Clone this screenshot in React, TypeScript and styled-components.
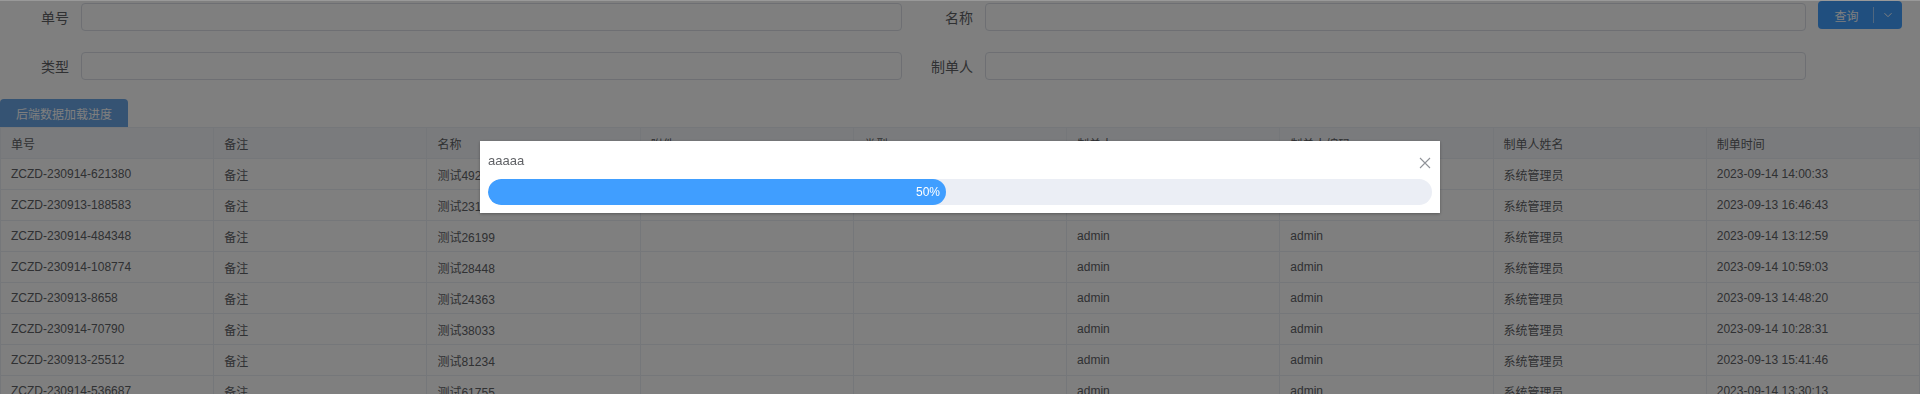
import React from "react";
import styled, { createGlobalStyle } from "styled-components";

const FONT = `"Liberation Sans", "Noto Sans CJK SC", sans-serif`;

const Global = createGlobalStyle`
  html, body { margin: 0; padding: 0; background: #fff; }
  body { font-family: ${FONT}; color: #606266; }
  * { box-sizing: border-box; }
`;

const Page = styled.div`
  width: 1920px;
  height: 394px;
  overflow: hidden;
  background: #fff;
`;

const SearchBar = styled.div`
  display: flex;
  align-items: flex-start;
  padding: 3px 18px 0 0;
`;

const FormGrid = styled.div`
  flex: 1;
  display: grid;
  grid-template-columns: 1fr 1fr;
  column-gap: 2px;
  row-gap: 21px;
`;

const FormItem = styled.div`
  display: flex;
  align-items: center;
  height: 28px;
`;

const Label = styled.label`
  width: 81px;
  flex: none;
  padding-right: 12px;
  text-align: right;
  font-size: 14px;
  color: #606266;
`;

const Input = styled.input`
  flex: 1;
  min-width: 0;
  height: 28px;
  border: 1px solid #dcdfe6;
  border-radius: 4px;
  background: #fff;
  outline: none;
`;

const SplitButton = styled.div`
  display: flex;
  align-items: center;
  width: 84px;
  height: 28px;
  margin: -2px 0 0 12px;
  background: #409eff;
  border-radius: 4px;
  color: #fff;
  font-size: 12px;
`;

const SplitMain = styled.span`
  width: 55px;
  text-align: center;
  padding-left: 2px;
`;

const SplitDivider = styled.span`
  width: 1px;
  height: 16px;
  background: rgba(255, 255, 255, 0.5);
`;

const SplitArrow = styled.span`
  flex: 1;
  display: flex;
  justify-content: center;
  align-items: center;
`;

const Toolbar = styled.div`
  display: flex;
  margin-top: 19px;
`;

const PrimaryButton = styled.button`
  height: 28px;
  width: 128px;
  border: none;
  border-radius: 4px 4px 0 0;
  background: #6aa6e6;
  color: #fff;
  font-family: ${FONT};
  font-size: 12px;
  padding: 0;
`;

const Table = styled.div`
  border-top: 1px solid #ebeef5;
  border-left: 1px solid #ebeef5;
`;

const Row = styled.div<{ $head?: boolean }>`
  display: grid;
  grid-template-columns: repeat(9, 1fr);
  background: ${(p) => (p.$head ? "#f5f7fa" : "#fff")};
`;

const Cell = styled.div`
  height: 31px;
  display: flex;
  align-items: center;
  padding: 0 10px;
  border-right: 1px solid #ebeef5;
  border-bottom: 1px solid #ebeef5;
  font-size: 12px;
  white-space: nowrap;
  overflow: hidden;
  color: #606266;
`;

const Mask = styled.div`
  position: fixed;
  inset: 0;
  background: rgba(0, 0, 0, 0.5);
  border-top: 1px solid rgba(255, 255, 255, 0.2);
`;

const Dialog = styled.div`
  position: fixed;
  top: 141px;
  left: 480px;
  width: 960px;
  background: #fff;
  box-shadow: 0 1px 3px rgba(0, 0, 0, 0.3);
  padding: 10px 8px 8px;
`;

const DialogTitle = styled.div`
  font-size: 13px;
  line-height: 20px;
  color: #606266;
  margin-bottom: 8px;
`;

const CloseButton = styled.button`
  position: absolute;
  top: 15px;
  right: 9px;
  width: 13px;
  height: 13px;
  padding: 0;
  border: none;
  background: transparent;
  display: flex;
  align-items: center;
  justify-content: center;
`;

const Track = styled.div`
  height: 26px;
  border-radius: 100px;
  background: #ebeef5;
  overflow: hidden;
`;

const Fill = styled.div`
  height: 100%;
  border-radius: 100px;
  background: #409eff;
  display: flex;
  align-items: center;
  justify-content: flex-end;
  padding-right: 6px;
  color: #fff;
  font-size: 12px;
`;

const headers = ["单号", "备注", "名称", "附件", "类型", "制单人", "制单人编码", "制单人姓名", "制单时间"];

const rows: [string, string, string][] = [
  ["ZCZD-230914-621380", "测试49213", "2023-09-14 14:00:33"],
  ["ZCZD-230913-188583", "测试23135", "2023-09-13 16:46:43"],
  ["ZCZD-230914-484348", "测试26199", "2023-09-14 13:12:59"],
  ["ZCZD-230914-108774", "测试28448", "2023-09-14 10:59:03"],
  ["ZCZD-230913-8658", "测试24363", "2023-09-13 14:48:20"],
  ["ZCZD-230914-70790", "测试38033", "2023-09-14 10:28:31"],
  ["ZCZD-230913-25512", "测试81234", "2023-09-13 15:41:46"],
  ["ZCZD-230914-536687", "测试61755", "2023-09-14 13:30:13"],
];

export default function App() {
  const percent = 50;
  return (
    <Page>
      <Global />
      <SearchBar>
        <FormGrid>
          <FormItem>
            <Label>单号</Label>
            <Input />
          </FormItem>
          <FormItem>
            <Label>名称</Label>
            <Input />
          </FormItem>
          <FormItem>
            <Label>类型</Label>
            <Input />
          </FormItem>
          <FormItem>
            <Label>制单人</Label>
            <Input />
          </FormItem>
        </FormGrid>
        <SplitButton>
          <SplitMain>查询</SplitMain>
          <SplitDivider />
          <SplitArrow>
            <svg width="10" height="10" viewBox="0 0 10 10" fill="none">
              <path d="M1.5 3.2 L5 6.7 L8.5 3.2" stroke="#fff" strokeWidth="1" />
            </svg>
          </SplitArrow>
        </SplitButton>
      </SearchBar>
      <Toolbar>
        <PrimaryButton>后端数据加载进度</PrimaryButton>
      </Toolbar>
      <Table>
        <Row $head>
          {headers.map((h) => (
            <Cell key={h}>{h}</Cell>
          ))}
        </Row>
        {rows.map(([no, name, time]) => (
          <Row key={no}>
            <Cell>{no}</Cell>
            <Cell>备注</Cell>
            <Cell>{name}</Cell>
            <Cell />
            <Cell />
            <Cell>admin</Cell>
            <Cell>admin</Cell>
            <Cell>系统管理员</Cell>
            <Cell>{time}</Cell>
          </Row>
        ))}
      </Table>
      <Mask />
      <Dialog>
        <DialogTitle>aaaaa</DialogTitle>
        <CloseButton aria-label="close">
          <svg width="12" height="12" viewBox="0 0 12 12" fill="none">
            <path d="M1 1 L11 11 M11 1 L1 11" stroke="#909399" strokeWidth="1.1" />
          </svg>
        </CloseButton>
        <Track>
          <Fill style={{ width: `calc(${percent}% - 14px)` }}>{percent}%</Fill>
        </Track>
      </Dialog>
    </Page>
  );
}
